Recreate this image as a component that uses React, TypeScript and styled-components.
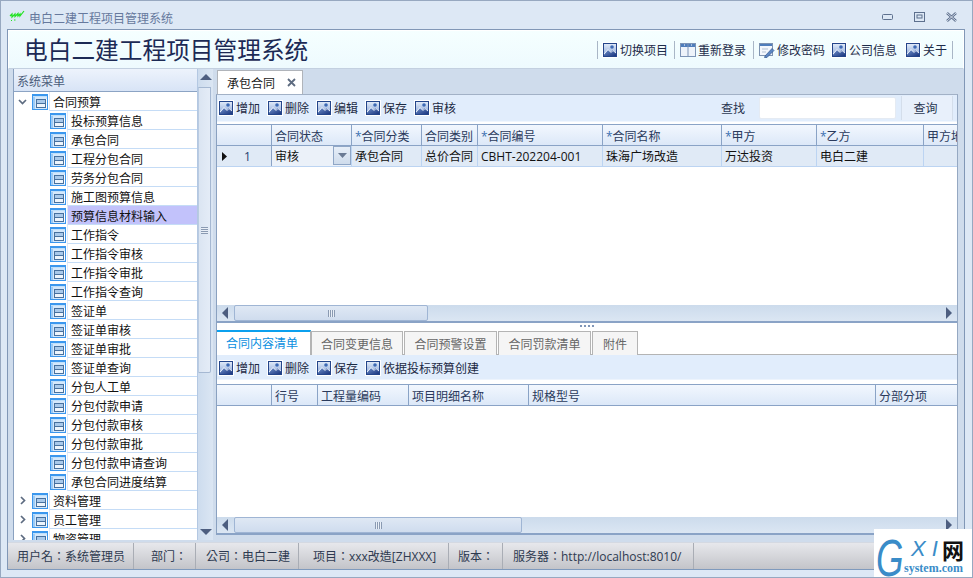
import React from 'react';
import styled, { createGlobalStyle } from 'styled-components';

const Global = createGlobalStyle`
  html, body { margin: 0; padding: 0; overflow: hidden; background: #dde8f5; }
  * { box-sizing: border-box; }
  body { font: 12px "Open Sans", "Noto Sans CJK SC", sans-serif; color: #1c2a44; }
`;

const Win = styled.div`
  position: relative; width: 973px; height: 578px; border: 1px solid #97a8c0; background: #dde8f5;
  padding: 0 7px 7px 6px; display: flex; flex-direction: column; overflow: hidden;
`;
const TitleBar = styled.div`height: 28px; display: flex; align-items: center; flex: none; padding-top: 7px;`;
const LogoBox = styled.svg`margin: -6px 0 0 2px; flex: none;`;
const TitleText = styled.div`color: #66799d; margin-left: 4px; line-height: 16px;`;
const WinBtns = styled.div`margin-left: auto; display: flex; align-items: center; gap: 21px; padding-right: 8px; margin-top: -3px;`;
const Frame = styled.div`flex: 1; min-height: 0; border: 1px solid #8197b6; background: #cfdcec; display: flex; flex-direction: column; border-bottom-color: #7f9abd;`;
const Header = styled.div`
  height: 39px; flex: none; background: linear-gradient(#f5ffff, #eefafe); border: 1px solid #fff; border-bottom: 1px solid #c3d0e0;
  display: flex; align-items: center; padding-left: 15px;
`;
const BigTitle = styled.div`font-size: 23.7px; color: #1c2a55; line-height: 30px; white-space: nowrap;`;
const HeadTools = styled.div`margin-left: auto; display: flex; align-items: center; height: 24px; margin-right: 10px; color: #1e2c4a;`;
const HeadSep = styled.i<{ $l?: number; $r?: number }>`width: 1px; height: 18px; background: #a9b6c6; margin: 0 ${p => p.$r ?? 4}px 0 ${p => p.$l ?? 0}px;`;
const HeadTool = styled.div<{ $ml?: number }>`display: flex; align-items: center; gap: 2px; margin-left: ${p => p.$ml ?? 0}px; white-space: nowrap;`;
const Body = styled.div`flex: 1; min-height: 0; display: flex; padding-left: 5px;`;
const Side = styled.div`width: 184px; flex: none; border-left: 1px solid #8aa1c0; background: #fff; display: flex; flex-direction: column; overflow: hidden;`;
const SideHead = styled.div`height: 23px; flex: none; background: linear-gradient(#edf3fc, #d8e4f6); border-bottom: 1px solid #8ca4c4; padding-left: 3px; line-height: 25px; color: #4b5c7a;`;
const TreeList = styled.div`flex: 1; min-height: 0; overflow: hidden;`;
const TreeRow = styled.div<{ $child?: boolean }>`height: 19px; display: flex; align-items: center; padding-left: ${p => (p.$child ? 36 : 4)}px; color: #111;`;
const Chevron = styled.span`width: 9px; height: 12px; margin-right: 5px; display: flex; align-items: center; justify-content: center; flex: none;`;
const TreeLabel = styled.div<{ $sel?: boolean }>`
  flex: 1; height: 19px; margin-left: 1px; padding-left: 3px; line-height: 21px; border-bottom: 1px solid #c5dcf6; border-left: 1px solid #dfeafa;
  background: ${p => (p.$sel ? '#c2c2fb' : 'transparent')};
`;
const VScroll = styled.div`width: 16px; flex: none; background: linear-gradient(90deg, #cddcee, #dbe6f3); display: flex; flex-direction: column; border-left: 1px solid #b4c8e2;`;
const ScrollBtn = styled.div<{ $h?: number; $w?: number }>`
  height: ${p => (p.$h ? p.$h + 'px' : 'auto')}; width: ${p => (p.$w ? p.$w + 'px' : 'auto')}; flex: none; display: flex; align-items: center; justify-content: center;
`;
const VThumb = styled.div`height: 286px; flex: none; width: 13px; background: linear-gradient(90deg, #dbe5f2, #e4ecf7); border: 1px solid #a5b8d2; border-left-color: #b9cbe2; border-radius: 0 0 2px 0; display: flex; align-items: center; justify-content: center;`;
const VTrack = styled.div`flex: 1;`;
const GripV = styled.div`width: 7px; height: 7px; background: repeating-linear-gradient(#8a9ab2 0 1px, #e9eff7 1px 2px);`;
const GripH = styled.div`width: 7px; height: 7px; background: repeating-linear-gradient(90deg, #8a9ab2 0 1px, #e9eff7 1px 2px);`;
const Main = styled.div`flex: 1; min-width: 0; margin: 1px 6px 5px 3px; display: flex; flex-direction: column;`;
const TopTabs = styled.div`height: 24px; flex: none; display: flex; padding-left: 1px;`;
const TopTab = styled.div`width: 86px; height: 24px; background: #fff; border: 1px solid #b0b4ba; border-bottom: 0; display: flex; align-items: center; padding-left: 9px; gap: 12px; color: #1a1a1a;`;
const Panel = styled.div`flex: 1; min-height: 0; display: flex; flex-direction: column; background: #fff; border-top: 1px solid #a2b1c6; border-left: 1px solid #8aa1c0; border-right: 1px solid #95a8c2;`;
const Toolbar = styled.div`height: 27px; flex: none; background: #e1edfc; border-bottom: 1px solid #f0f6fe; display: flex; align-items: center; padding-left: 1px; position: relative;`;
const ToolBtn = styled.div`display: flex; align-items: center; gap: 2px; width: 49px; flex: none; white-space: nowrap; color: #1c2a44;`;
const FindLabel = styled.div`margin-left: auto; color: #2a3752;`;
const FindInput = styled.div`width: 137px; height: 22px; margin-left: 14px; background: #fff; border: 1px solid #e5ebf3; border-radius: 2px;`;
const FindBtn = styled.div`width: 52px; height: 24px; margin-left: 5px; margin-right: 4px; padding-right: 3px; text-align: center; line-height: 26px; color: #2a3752; background: #e8f0fb; border-left: 1px solid #d4deeb; border-right: 1px solid #d4deeb;`;
const GapStrip = styled.div`height: 2px; flex: none; background: #fff;`;
const GridHead = styled.div`height: 22px; flex: none; display: flex; overflow: hidden; background: linear-gradient(#f2f7fe, #dce8f8); border-top: 1px solid #8aa3c6; border-bottom: 1px solid #8aa3c6;`;
const HCell = styled.div<{ $w: number }>`width: ${p => p.$w}px; flex: none; border-right: 1px solid #8aa3c6; padding-left: 3px; line-height: 23px; white-space: nowrap; overflow: hidden; color: #2a3a5c;`;
const Star = styled.span`color: #3c70b0;`;
const GridRow = styled.div`height: 21px; flex: none; display: flex; overflow: hidden; background: #e0eaf6; border-bottom: 1px solid #bcd4f2;`;
const RowHead = styled.div<{ $w: number }>`width: ${p => p.$w}px; flex: none; display: flex; align-items: center; padding-left: 4px; gap: 16px; border-right: 1px solid #8aa3c6; border-bottom: 1px solid #8aa3c6; margin-bottom: -1px; color: #26406e;`;
const Cell = styled.div<{ $w: number }>`width: ${p => p.$w}px; flex: none; border-right: 1px solid #bcd4f2; padding-left: 3px; line-height: 22px; white-space: nowrap; color: #111; display: flex;`;
const Editor = styled(Cell)`background: #ebf1f9; padding-right: 0; justify-content: space-between;`;
const DropBtn = styled.div`width: 18px; height: 19px; background: linear-gradient(#e6eef8, #cfdcec); border: 1px solid #8fa6c6; display: flex; align-items: center; justify-content: center;`;
const TopGridBody = styled.div`height: 138px; flex: none; background: #fff;`;
const GridBody = styled.div`flex: 1; min-height: 0; background: #fff;`;
const HScroll = styled.div`height: 18px; flex: none; display: flex; background: linear-gradient(#ccdbec, #dbe6f3); border-bottom: 2px solid #8aa3c6;`;
const HThumb = styled.div<{ $w: number }>`width: ${p => p.$w}px; flex: none; background: linear-gradient(#dfe8f4, #cfdcee); border: 1px solid #9fb5d4; border-radius: 2px; display: flex; align-items: center; justify-content: center;`;
const HTrack = styled.div`flex: 1;`;
const Splitter = styled.div`height: 7px; flex: none; background: #fff; display: flex; align-items: center; justify-content: center; gap: 2px; padding-bottom: 1px;`;
const Dot = styled.i`width: 2px; height: 2px; background: #8096b8;`;
const SubTabs = styled.div`height: 25px; flex: none; display: flex; background: #fff; border-bottom: 1px solid #b4b4b4;`;
const SubTab = styled.div<{ $w: number; $active?: boolean }>`
  width: ${p => p.$w}px; flex: none; text-align: center; margin-right: ${p => (p.$active ? 0 : 1)}px;
  ${p => p.$active
    ? 'height: 25px; background: #fff; border-top: 2px solid #0ba0ee; border-right: 1px solid #b4b4b4; color: #0a8fdf; line-height: 24px; padding-right: 3px;'
    : 'height: 24px; margin-top: 1px; background: #f5f5f5; border: 1px solid #b4b4b4; border-bottom: 0; color: #666; line-height: 25px;'}
`;
const SubToolbar = styled(Toolbar)`height: 25px; margin-bottom: 4px; border-bottom: 1px solid #edf4fd; padding-top: 1px;`;
const Status = styled.div`height: 27px; flex: none; margin-top: 2px; background: linear-gradient(#e7e8ec, #c3c4c9); border-top: 1px solid #d4d9e2; display: flex; align-items: center; color: #2e3a50; white-space: nowrap; padding-left: 9px; font-family: "Open Sans", "Noto Sans CJK TC", sans-serif;`;
const StatusItem = styled.div<{ $w: number; $pl?: number }>`width: ${p => p.$w}px; flex: none; height: 100%; line-height: 28px; border-right: 1px solid #a9adb5; margin-right: 1px; padding-left: ${p => p.$pl ?? 0}px;`;
const Mark = styled.div`position: absolute; right: 0; bottom: 0; width: 98px; height: 48px; background: #fff; overflow: hidden;`;
const MarkG = styled.span`position: absolute; left: 2px; top: 7px; font: italic 400 52px/44px "Liberation Sans", sans-serif; color: #3a8cc8; transform: scaleX(0.68); transform-origin: left top;`;
const MarkXI = styled.span`position: absolute; left: 37px; top: 8px; font: italic 400 22px/24px "Liberation Sans", sans-serif; color: #3a8cc8; letter-spacing: 6px;`;
const MarkNet = styled.span`position: absolute; left: 68px; top: 8px; font: 700 22px/24px "Noto Sans CJK SC", sans-serif; color: #111;`;
const MarkSub = styled.span`position: absolute; left: 30px; top: 33px; font: 700 12px/12px "Liberation Serif", serif; color: #3a8cc8;`;

const PicIcon = () => (
  <svg width="16" height="16" viewBox="0 0 16 16" style={{ flex: 'none' }}>
    <defs>
      <linearGradient id="pg" x1="0" y1="0" x2="0" y2="1"><stop offset="0" stopColor="#e3ecf9" /><stop offset="1" stopColor="#86a3d6" /></linearGradient>
      <linearGradient id="pm" x1="0" y1="0" x2="1" y2="1"><stop offset="0" stopColor="#6f90ca" /><stop offset="1" stopColor="#1b367f" /></linearGradient>
    </defs>
    <rect x="0.5" y="0.5" width="15" height="15" fill="#fff" stroke="#fff" />
    <rect x="1.5" y="1.5" width="13" height="13" fill="url(#pg)" stroke="#24458a" />
    <circle cx="10" cy="5" r="1.8" fill="#3d69b4" />
    <path d="M2 13 L6 8 L8.5 10 L11 8 L14 11 V14 H2 Z" fill="url(#pm)" />
    <path d="M2 12 L6 7.5 L9 10.5 L11 8.5 L14 11" fill="none" stroke="#f2f6fd" strokeWidth="0.9" />
  </svg>
);
const ColsIcon = () => (
  <svg width="16" height="14" viewBox="0 0 16 14" style={{ flex: 'none' }}>
    <rect x="0.5" y="0.5" width="15" height="13" fill="#eef3fa" stroke="#7d94b6" />
    <rect x="1" y="1" width="14" height="3" fill="#4f7dbb" />
    <path d="M8 1V13" stroke="#7d94b6" />
    <path d="M4 2h1M11 2h1" stroke="#fff" />
  </svg>
);
const FormIcon = () => (
  <svg width="16" height="16" viewBox="0 0 16 16" style={{ flex: 'none' }}>
    <rect x="0.5" y="1.5" width="13" height="12" fill="#f3f7fc" stroke="#7e93b0" />
    <rect x="1" y="2" width="12" height="2" fill="#4f7dbb" />
    <path d="M3 7h6M3 10h4" stroke="#b3c1d3" />
    <path d="M6 14 L13 6.5 L15 8.5 L8 15.5 L5.5 15.5 Z" fill="#5b86c2" stroke="#33578f" strokeWidth="0.7" />
  </svg>
);
const TreeIcon = () => (
  <svg width="16" height="16" viewBox="0 0 16 16" style={{ flex: 'none' }}>
    <rect x="0" y="0" width="16" height="16" fill="#3b97ee" />
    <rect x="1" y="2" width="14" height="1" fill="#bfe0fb" />
    <rect x="1" y="3" width="14" height="12" fill="#d5e8fb" />
    <rect x="1" y="3" width="2" height="12" fill="#9ccbf6" />
    <rect x="4" y="5" width="11" height="9" fill="#fff" />
    <rect x="4.5" y="5.5" width="9" height="8" fill="#eef5fc" stroke="#47719f" />
    <path d="M5 9.5h8" stroke="#47719f" />
    <rect x="5" y="6" width="8" height="3" fill="#a9c9ea" />
  </svg>
);
const Tri = ({ d }: { d: 'u' | 'd' | 'l' | 'r' }) => {
  const p = { u: 'M0 8L6 2L12 8Z', d: 'M0 3L12 3L6 9Z', l: 'M8 0V12L2 6Z', r: 'M3 0V12L9 6Z' }[d];
  return <svg width="12" height="12" viewBox="0 0 12 12"><path d={p} fill="#4d5e80" /></svg>;
};
const Chev = ({ open }: { open: boolean }) => (
  <svg width="9" height="9" viewBox="0 0 9 9">
    <path d={open ? 'M1 3L4.5 6.5L8 3' : 'M3 1L6.5 4.5L3 8'} fill="none" stroke="#5d6b80" strokeWidth="1.7" />
  </svg>
);
const Logo = () => (
  <LogoBox width="16" height="12" viewBox="0 0 16 12">
    <path d="M1 6L3 4L3 7L6 4L6 6.5L9 3.5L9 6L11 4L11 6L15 1" fill="none" stroke="#22e322" strokeWidth="1.2" />
    <path d="M2 10.5h1M5 10h1.5" stroke="#22e322" />
  </LogoBox>
);

const children = ['投标预算信息', '承包合同', '工程分包合同', '劳务分包合同', '施工图预算信息', '预算信息材料输入', '工作指令', '工作指令审核', '工作指令审批', '工作指令查询', '签证单', '签证单审核', '签证单审批', '签证单查询', '分包人工单', '分包付款申请', '分包付款审核', '分包付款审批', '分包付款申请查询', '承包合同进度结算'];
const topCols: [string, number, boolean][] = [['合同状态', 80, false], ['合同分类', 70, true], ['合同类别', 56, false], ['合同编号', 125, true], ['合同名称', 119, true], ['甲方', 95, true], ['乙方', 107, true], ['甲方地址', 60, false]];
const topVals = ['', '承包合同', '总价合同', 'CBHT-202204-001', '珠海广场改造', '万达投资', '电白二建', ''];
const subCols: [string, number][] = [['行号', 46], ['工程量编码', 91], ['项目明细名称', 120], ['规格型号', 347], ['分部分项', 90]];
const subTabs: [string, number][] = [['合同内容清单', 94], ['合同变更信息', 92], ['合同预警设置', 93], ['合同罚款清单', 93], ['附件', 46]];

const Tool = ({ t }: { t: string }) => <ToolBtn><PicIcon />{t}</ToolBtn>;

export default function App() {
  return (
    <Win>
      <Global />
      <TitleBar>
        <Logo />
        <TitleText>电白二建工程项目管理系统</TitleText>
        <WinBtns>
          <svg width="11" height="6" viewBox="0 0 11 6"><rect x="0.5" y="0.5" width="10" height="5" rx="1" fill="none" stroke="#5d708e" /></svg>
          <svg width="11" height="10" viewBox="0 0 11 10"><rect x="0.5" y="0.5" width="10" height="9" fill="none" stroke="#5d708e" /><rect x="3" y="3" width="5" height="3" fill="none" stroke="#5d708e" /></svg>
          <svg width="11" height="10" viewBox="0 0 11 10"><path d="M1 1L10 9M10 1L1 9" stroke="#5d708e" strokeWidth="2.4" /><path d="M1 1L10 9M10 1L1 9" stroke="#eef3fa" strokeWidth="0.8" /></svg>
        </WinBtns>
      </TitleBar>
      <Frame>
        <Header>
          <BigTitle>电白二建工程项目管理系统</BigTitle>
          <HeadTools>
            <HeadSep />
            <HeadTool><PicIcon />切换项目</HeadTool>
            <HeadSep $l={6} $r={5} />
            <HeadTool><ColsIcon />重新登录</HeadTool>
            <HeadSep $l={7} $r={5} />
            <HeadTool><FormIcon />修改密码</HeadTool>
            <HeadTool $ml={6}><PicIcon />公司信息</HeadTool>
            <HeadTool $ml={8}><PicIcon />关于</HeadTool>
            <HeadSep $l={5} $r={0} />
          </HeadTools>
        </Header>
        <Body>
          <Side>
            <SideHead>系统菜单</SideHead>
            <TreeList>
              <TreeRow><Chevron><Chev open /></Chevron><TreeIcon /><TreeLabel>合同预算</TreeLabel></TreeRow>
              {children.map(c => (
                <TreeRow $child key={c}><TreeIcon /><TreeLabel $sel={c === '预算信息材料输入'}>{c}</TreeLabel></TreeRow>
              ))}
              {['资料管理', '员工管理', '物资管理'].map(c => (
                <TreeRow key={c}><Chevron><Chev open={false} /></Chevron><TreeIcon /><TreeLabel>{c}</TreeLabel></TreeRow>
              ))}
            </TreeList>
          </Side>
          <VScroll>
            <ScrollBtn $h={18}><Tri d="u" /></ScrollBtn>
            <VThumb><GripV /></VThumb>
            <VTrack />
            <ScrollBtn $h={16}><Tri d="d" /></ScrollBtn>
          </VScroll>
          <Main>
            <TopTabs>
              <TopTab>承包合同
                <svg width="9" height="9" viewBox="0 0 9 9"><path d="M1 1L8 8M8 1L1 8" stroke="#5d6b80" strokeWidth="1.8" /></svg>
              </TopTab>
            </TopTabs>
            <Panel>
              <Toolbar>
                {['增加', '删除', '编辑', '保存', '审核'].map(t => <Tool t={t} key={t} />)}
                <FindLabel>查找</FindLabel>
                <FindInput />
                <FindBtn>查询</FindBtn>
              </Toolbar>
              <GapStrip />
              <GridHead>
                <HCell $w={55} />
                {topCols.map(([t, w, s]) => <HCell $w={w} key={t}>{s && <Star>*</Star>}{t}</HCell>)}
              </GridHead>
              <GridRow>
                <RowHead $w={55}>
                  <svg width="7" height="9" viewBox="0 0 7 9"><path d="M1 0V9L6 4.5Z" fill="#111" /></svg>1
                </RowHead>
                <Editor $w={80}>审核<DropBtn><svg width="9" height="5" viewBox="0 0 9 5"><path d="M0 0H9L4.5 5Z" fill="#6a7a94" /></svg></DropBtn></Editor>
                {topCols.slice(1).map(([t, w], i) => <Cell $w={w} key={t}>{topVals[i + 1]}</Cell>)}
              </GridRow>
              <TopGridBody />
              <HScroll>
                <ScrollBtn $w={17}><Tri d="l" /></ScrollBtn>
                <HThumb $w={194}><GripH /></HThumb>
                <HTrack />
                <ScrollBtn $w={17}><Tri d="r" /></ScrollBtn>
              </HScroll>
              <Splitter><Dot /><Dot /><Dot /><Dot /></Splitter>
              <SubTabs>
                {subTabs.map(([t, w], i) => <SubTab $w={w} $active={i === 0} key={t}>{t}</SubTab>)}
              </SubTabs>
              <SubToolbar>
                <Tool t="增加" /><Tool t="删除" /><Tool t="保存" />
                <Tool t="依据投标预算创建" />
              </SubToolbar>
              <GridHead>
                <HCell $w={55} />
                {subCols.map(([t, w]) => <HCell $w={w} key={t}>{t}</HCell>)}
              </GridHead>
              <GridBody />
              <HScroll>
                <ScrollBtn $w={17}><Tri d="l" /></ScrollBtn>
                <HThumb $w={288}><GripH /></HThumb>
                <HTrack />
                <ScrollBtn $w={17}><Tri d="r" /></ScrollBtn>
              </HScroll>
            </Panel>
          </Main>
        </Body>
        <Status>
          <StatusItem $w={117}>用户名：系统管理员</StatusItem>
          <StatusItem $w={61} $pl={16}>部门：</StatusItem>
          <StatusItem $w={102} $pl={9}>公司：电白二建</StatusItem>
          <StatusItem $w={149} $pl={13}>项目：xxx改造[ZHXXX]</StatusItem>
          <StatusItem $w={53} $pl={8}>版本：</StatusItem>
          <StatusItem $w={190} $pl={9}>服务器：http://localhost:8010/</StatusItem>
        </Status>
      </Frame>
      <Mark>
        <MarkG>G</MarkG>
        <MarkXI>XI</MarkXI>
        <MarkNet>网</MarkNet>
        <MarkSub>system.com</MarkSub>
      </Mark>
    </Win>
  );
}
